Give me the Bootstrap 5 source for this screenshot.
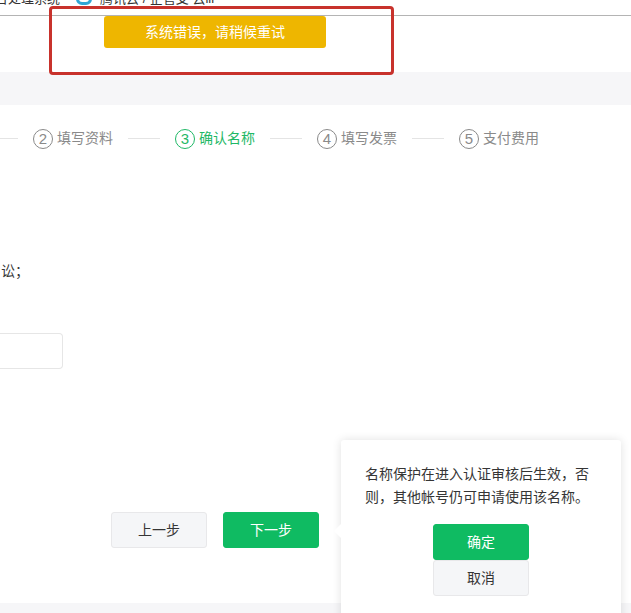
<!DOCTYPE html>
<html lang="zh-CN">
<head>
<meta charset="UTF-8" />
<title>确认名称</title>
<link href="https://cdn.jsdelivr.net/npm/bootstrap@5.3.2/dist/css/bootstrap.min.css" rel="stylesheet" />
<style>
  html, body { height: 613px; overflow: hidden; }
  body { font-family: "Liberation Sans", "Noto Sans CJK SC", sans-serif; font-size: 14px; color: #353535; background: #fff; position: relative; }
  .bm-bar { height: 16px; border-bottom: 1px solid #b4b4b4; overflow: hidden; font-size: 13px; line-height: 14px; color: #333; white-space: nowrap; }
  .bm-inner { margin-top: -8px; margin-left: -5px; }
  .bm-dot { width: 16px; height: 16px; border: 3px solid #2fa6d6; border-radius: 6px; margin: -5px 8px 0 16px; }
  .gap-top { height: 56px; }
  .band { height: 33px; background: #f6f6f8; }
  .steps { height: 67px; color: #8a8a8a; margin-left: -29px; }
  .step-line { width: 32px; height: 1px; background: #e4e4e4; margin: 0 15px; }
  .step-num { width: 20px; height: 20px; border: 1px solid #8a8a8a; border-radius: 50%; font-size: 15px; font-weight: 300; line-height: 18px; text-align: center; margin-right: 4px; }
  .step-on { color: #1fb866; }
  .step-on .step-num { border-color: #1fb866; }
  .term-text { margin-top: 89px; margin-left: 1px; height: 20px; line-height: 20px; }
  .name-input { width: 63px; height: 36px; margin-top: 52px; border: 1px solid #e6e6e6; border-left: 0; border-radius: 0 4px 4px 0; }
  .btn-row { position: absolute; left: 111px; top: 512px; }
  .pg-btn { width: 96px; height: 36px; padding: 0; font-size: 14px; border-radius: 3px; }
  .pg-grey { background: #f5f6f8; border: 1px solid #e8e8ea; color: #353535; }
  .pg-green { background: #0fbb62; border: 1px solid #0fbb62; color: #fff; }
  .foot-band { position: absolute; left: 0; right: 0; top: 603px; height: 10px; background: #f6f6f8; }
  .toast-msg { position: absolute; left: 104px; top: 16px; width: 222px; height: 32px; background: #eeb600; color: #fff; border-radius: 3px; font-size: 14px; line-height: 32px; text-align: center; }
  .note-box { position: absolute; left: 49px; top: 6px; width: 345px; height: 69px; border: 3px solid #c8322c; border-radius: 4px; }
  .pop-box { position: absolute; left: 341px; top: 440px; width: 280px; height: 190px; background: #fff; border-radius: 3px; box-shadow: 0 0 10px rgba(0,0,0,.12); padding: 23px 24px 0; }
  .pop-box::before { content: ""; position: absolute; left: -5px; top: 86px; width: 10px; height: 10px; background: #fff; transform: rotate(45deg); }
  .pop-text { line-height: 23px; margin: 0; }
  .pop-actions { margin-top: 15px; }
</style>
</head>
<body>
  <div class="bm-bar">
    <div class="bm-inner d-flex align-items-center">
      <span>台处理系统</span>
      <span class="bm-dot"></span>
      <span>腾讯云 / 企管支 云iii</span>
    </div>
  </div>
  <div class="gap-top"></div>
  <div class="band"></div>
  <div class="steps d-flex align-items-center">
    <span class="step-line"></span>
    <span class="d-flex align-items-center"><span class="step-num">2</span>填写资料</span>
    <span class="step-line"></span>
    <span class="d-flex align-items-center step-on"><span class="step-num">3</span>确认名称</span>
    <span class="step-line"></span>
    <span class="d-flex align-items-center"><span class="step-num">4</span>填写发票</span>
    <span class="step-line"></span>
    <span class="d-flex align-items-center"><span class="step-num">5</span>支付费用</span>
  </div>
  <div class="term-text">讼&#xFF1B;</div>
  <div class="name-input"></div>

  <div class="btn-row d-flex gap-3">
    <button type="button" class="btn pg-btn pg-grey">上一步</button>
    <button type="button" class="btn pg-btn pg-green">下一步</button>
  </div>
  <div class="foot-band"></div>

  <div class="toast-msg">系统错误&#xFF0C;请稍候重试</div>
  <div class="note-box"></div>

  <div class="pop-box">
    <p class="pop-text">名称保护在进入认证审核后生效&#xFF0C;否则&#xFF0C;其他帐号仍可申请使用该名称&#x3002;</p>
    <div class="pop-actions d-flex flex-column align-items-center">
      <button type="button" class="btn pg-btn pg-green">确定</button>
      <button type="button" class="btn pg-btn pg-grey">取消</button>
    </div>
  </div>
  <script src="https://cdn.jsdelivr.net/npm/bootstrap@5.3.2/dist/js/bootstrap.bundle.min.js"></script>
</body>
</html>
